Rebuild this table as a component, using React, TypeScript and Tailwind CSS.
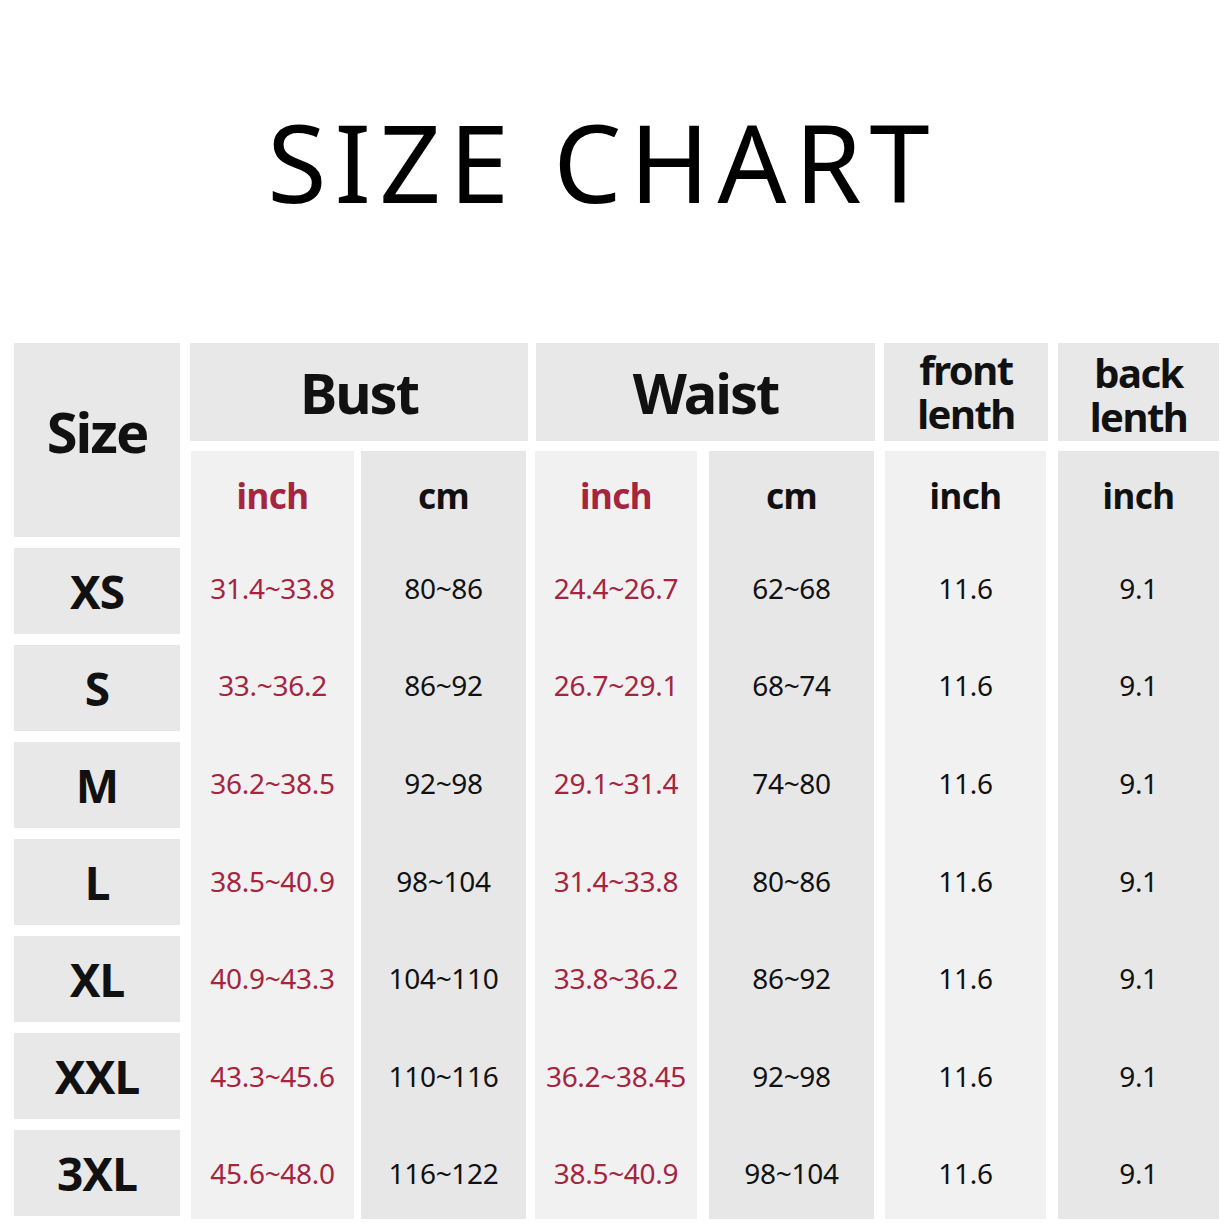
import React from 'react';

const sizes = ['XS', 'S', 'M', 'L', 'XL', 'XXL', '3XL'];

const rows = [
  ['31.4~33.8', '80~86', '24.4~26.7', '62~68', '11.6', '9.1'],
  ['33.~36.2', '86~92', '26.7~29.1', '68~74', '11.6', '9.1'],
  ['36.2~38.5', '92~98', '29.1~31.4', '74~80', '11.6', '9.1'],
  ['38.5~40.9', '98~104', '31.4~33.8', '80~86', '11.6', '9.1'],
  ['40.9~43.3', '104~110', '33.8~36.2', '86~92', '11.6', '9.1'],
  ['43.3~45.6', '110~116', '36.2~38.45', '92~98', '11.6', '9.1'],
  ['45.6~48.0', '116~122', '38.5~40.9', '98~104', '11.6', '9.1'],
];

const columns = [
  { unit: 'inch', red: true, bg: 'bg-[#f1f1f1]', width: 'w-[163px]', ml: 'ml-[1px]' },
  { unit: 'cm', red: false, bg: 'bg-[#e7e7e7]', width: 'w-[165px]', ml: 'ml-[7px]' },
  { unit: 'inch', red: true, bg: 'bg-[#f1f1f1]', width: 'w-[162px]', ml: 'ml-[9px]' },
  { unit: 'cm', red: false, bg: 'bg-[#e7e7e7]', width: 'w-[165px]', ml: 'ml-[12px]' },
  { unit: 'inch', red: false, bg: 'bg-[#f1f1f1]', width: 'w-[161px]', ml: 'ml-[11px]' },
  { unit: 'inch', red: false, bg: 'bg-[#e7e7e7]', width: 'w-[161px]', ml: 'ml-[12px]' },
];

function Strip({ index }: { index: number }) {
  const col = columns[index];
  const color = col.red ? 'text-[#a5253f]' : 'text-[#111]';
  return (
    <div className={`${col.width} ${col.ml} ${col.bg} flex h-[768px] flex-col overflow-hidden`}>
      <div className="flex h-[90px] shrink-0 items-center justify-center">
        <span className={`text-[35px] font-bold tracking-[-0.5px] ${color}`}>{col.unit}</span>
      </div>
      <div className="mt-[-2px] flex flex-col">
        {rows.map((r, i) => (
          <div key={i} className="flex h-[97.6px] shrink-0 items-center justify-center">
            <span className={`text-[28px] tracking-[-0.3px] ${color}`}>{r[index]}</span>
          </div>
        ))}
      </div>
    </div>
  );
}

export default function App() {
  return (
    <div
      className="h-[1231px] w-[1231px] overflow-hidden bg-white"
      style={{ fontFamily: '"Noto Sans", "Open Sans", sans-serif' }}
    >
      {/* Title */}
      <h1 className="pt-[108px] text-center text-[108px] leading-none tracking-[8px] text-black">
        <span className="ml-[-26px]">SIZE CHART</span>
      </h1>

      {/* Table */}
      <div className="mt-[127px] flex pl-[14px]">
        {/* Size column */}
        <div className="flex w-[166px] flex-col gap-[11px]">
          <div className="flex h-[194px] items-center justify-center bg-[#e8e8e8]">
            <span className="mt-[-18px] text-[56px] font-bold tracking-[-2px] text-[#111]">Size</span>
          </div>
          {sizes.map((s) => (
            <div key={s} className="flex h-[86px] items-center justify-center bg-[#e8e8e8]">
              <span className="text-[46px] font-bold tracking-[-1px] text-[#111]">{s}</span>
            </div>
          ))}
        </div>

        {/* Measurements */}
        <div className="ml-[10px] flex flex-col">
          <div className="flex h-[98px] gap-[8px]">
            <div className="flex w-[338px] items-center justify-center bg-[#e8e8e8]">
              <span className="text-[56px] font-bold tracking-[-2px] text-[#111]">Bust</span>
            </div>
            <div className="flex w-[339px] items-center justify-center bg-[#e8e8e8]">
              <span className="text-[56px] font-bold tracking-[-2px] text-[#111]">Waist</span>
            </div>
            <div className="ml-[1px] flex w-[164px] flex-col items-center justify-center bg-[#e8e8e8] text-[40px] font-bold leading-[44px] tracking-[-1.5px] text-[#111]">
              <div>front</div>
              <div>lenth</div>
            </div>
            <div className="ml-[2px] flex w-[161px] flex-col items-center justify-center bg-[#e8e8e8] pt-[6px] text-[40px] font-bold leading-[44px] tracking-[-1.5px] text-[#111]">
              <div>back</div>
              <div>lenth</div>
            </div>
          </div>
          <div className="mt-[10px] flex">
            {columns.map((_, i) => (
              <Strip key={i} index={i} />
            ))}
          </div>
        </div>
      </div>
    </div>
  );
}
